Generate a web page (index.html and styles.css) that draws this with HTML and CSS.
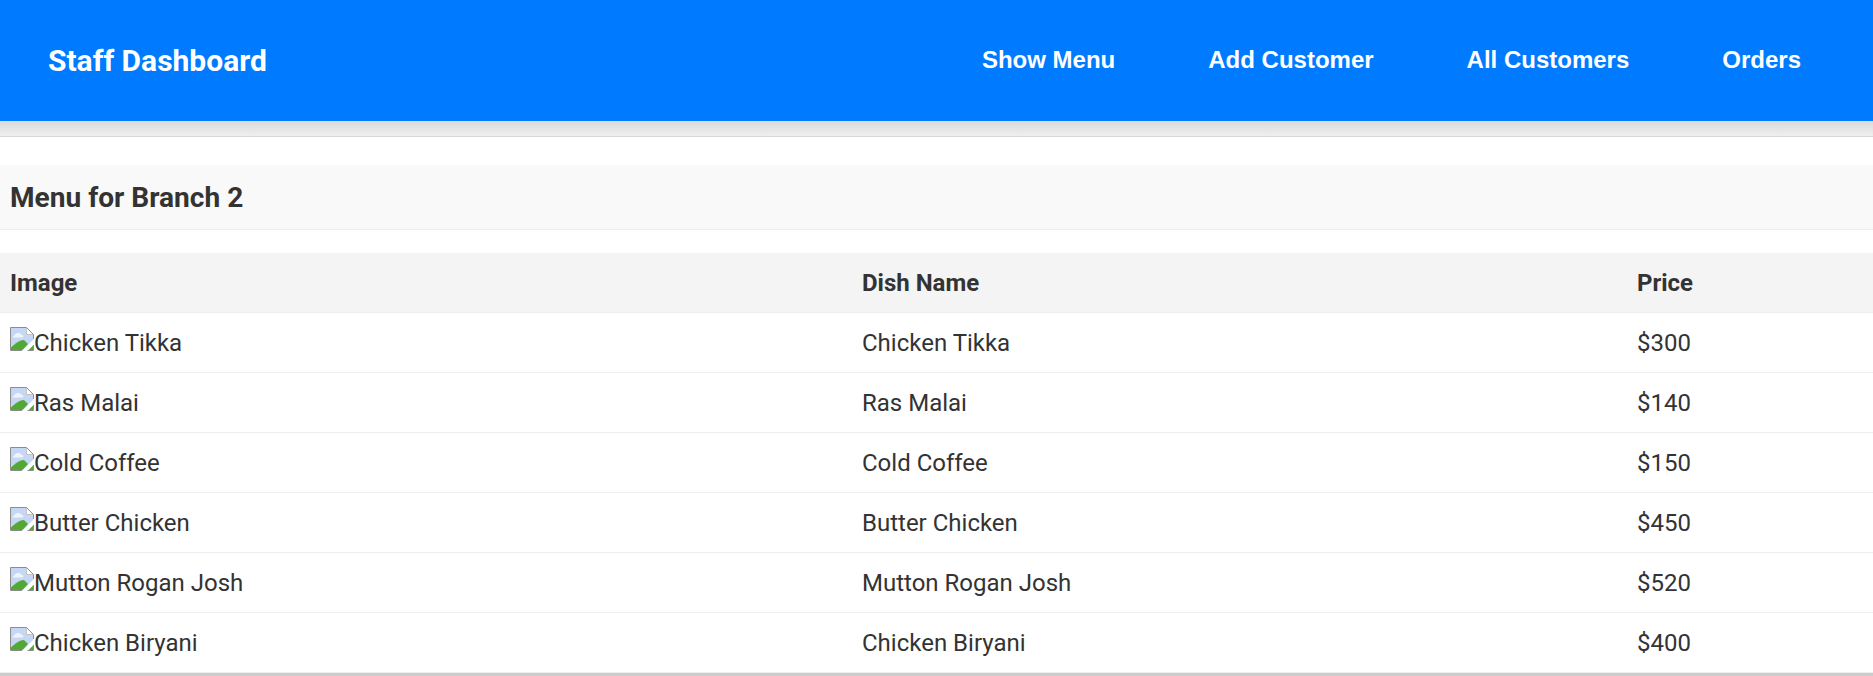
FILE: index.html
```html
<!DOCTYPE html>
<html lang="en">
<head>
    <meta charset="UTF-8">
    <meta name="viewport" content="width=device-width, initial-scale=1.0">
    <title>Staff Dashboard</title>
    <link rel="stylesheet" href="styles.css">
</head>
<body>
    <svg class="icon-defs" width="0" height="0" aria-hidden="true">
        <symbol id="broken-image" viewBox="0 0 24 24">
            <path d="M1 1H16L23 8V23H1Z" fill="#c6d7f5"/>
            <path d="M4 9C5 6 9 5 11 7.5C13 7.5 14 9.5 13 10.5H3.5C2.5 10.5 2.5 9 4 9Z" fill="#eef3fc"/>
            <path d="M1 23V20.5C5 16.5 10 13 14 13L18 17L12.5 23Z" fill="#52a830"/>
            <path d="M18 23L23 18V23Z" fill="#52a830"/>
            <path d="M12 24L24 12V17.5L17.5 24Z" fill="#fff"/>
            <path d="M16.5 1V7.5H23" fill="#fff" stroke="#c4c4c4"/>
            <path d="M23.5 12V7.5L16.5 0.5H0.5V23.5H12" fill="none" stroke="#8c8c8c"/>
            <path d="M17.5 23.5H23.5V18" fill="none" stroke="#8c8c8c"/>
        </symbol>
    </svg>
    <header class="navbar">
        <a class="brand" href="#">Staff Dashboard</a>
        <nav class="nav-links">
            <a href="#">Show Menu</a>
            <a href="#">Add Customer</a>
            <a href="#">All Customers</a>
            <a href="#">Orders</a>
        </nav>
    </header>
    <hr class="divider">
    <main class="content">
        <h2 class="section-title">Menu for Branch 2</h2>
        <table class="menu-table">
            <colgroup>
                <col class="col-image">
                <col class="col-name">
                <col class="col-price">
            </colgroup>
            <thead>
                <tr><th>Image</th><th>Dish Name</th><th>Price</th></tr>
            </thead>
            <tbody>
                <tr>
                    <td><svg class="broken-img"><use href="#broken-image"/></svg>Chicken Tikka</td>
                    <td>Chicken Tikka</td>
                    <td>$300</td>
                </tr>
                <tr>
                    <td><svg class="broken-img"><use href="#broken-image"/></svg>Ras Malai</td>
                    <td>Ras Malai</td>
                    <td>$140</td>
                </tr>
                <tr>
                    <td><svg class="broken-img"><use href="#broken-image"/></svg>Cold Coffee</td>
                    <td>Cold Coffee</td>
                    <td>$150</td>
                </tr>
                <tr>
                    <td><svg class="broken-img"><use href="#broken-image"/></svg>Butter Chicken</td>
                    <td>Butter Chicken</td>
                    <td>$450</td>
                </tr>
                <tr>
                    <td><svg class="broken-img"><use href="#broken-image"/></svg>Mutton Rogan Josh</td>
                    <td>Mutton Rogan Josh</td>
                    <td>$520</td>
                </tr>
                <tr>
                    <td><svg class="broken-img"><use href="#broken-image"/></svg>Chicken Biryani</td>
                    <td>Chicken Biryani</td>
                    <td>$400</td>
                </tr>
            </tbody>
        </table>
    </main>
</body>
</html>
```

FILE: styles.css
```css
:root {
    --accent-color: #007bff;
    --text-color: #333;
    --line-color: #eee;
}

html {
    height: 100%;
}

body {
    margin: 0;
    height: 100%;
    overflow: hidden;
    font-family: Roboto, Arial, sans-serif;
    color: var(--text-color);
    background-color: #fff;
}

.icon-defs {
    display: block;
    height: 0;
}

.navbar {
    display: flex;
    align-items: center;
    justify-content: space-between;
    height: 121px;
    padding: 0 72px 0 48px;
    background-color: var(--accent-color);
}

.brand {
    font-size: 30px;
    font-weight: 700;
    color: #fff;
    text-decoration: none;
}

.nav-links {
    display: flex;
    gap: 93px;
    padding-bottom: 2px;
}

.nav-links a {
    font-family: "Liberation Sans", Arial, sans-serif;
    font-size: 24px;
    font-weight: 700;
    color: #fff;
    text-decoration: none;
}

/* soft band under the navbar, ends in a thin line */
.divider {
    margin: 0;
    height: 16px;
    box-sizing: border-box;
    border: none;
    border-bottom: 1px solid #d8d8d8;
    background: linear-gradient(#dadada, #efefef);
}

.content {
    padding-top: 28px;
}

.section-title {
    margin: 0;
    padding: 0 10px;
    height: 65px;
    box-sizing: border-box;
    display: flex;
    align-items: center;
    font-size: 28.08px;
    font-weight: 700;
    background-color: #f9f9f9;
    border-bottom: 1px solid var(--line-color);
}

.menu-table {
    width: 100%;
    margin-top: 23px;
    table-layout: fixed;
    border-collapse: separate;
    border-spacing: 0;
    font-size: 24px;
    border-bottom: 3px solid #ccc;
}

.col-image {
    width: 852px;
}

.col-name {
    width: 775px;
}

.menu-table th,
.menu-table td {
    height: 60px;
    padding: 0 10px;
    box-sizing: border-box;
    text-align: left;
    border-bottom: 1px solid var(--line-color);
}

.menu-table th {
    font-weight: 700;
    background-color: #f4f4f4;
}

.broken-img {
    width: 24px;
    height: 24px;
    margin-top: -4px;
}
```
